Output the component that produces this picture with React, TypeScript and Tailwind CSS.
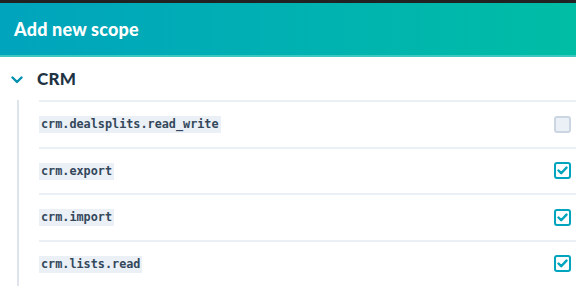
import React from "react";

const rows = [
  { name: "crm.dealsplits.read_write", checked: false },
  { name: "crm.export", checked: true },
  { name: "crm.import", checked: true },
  { name: "crm.lists.read", checked: true },
];

function Check({ checked }: { checked: boolean }) {
  if (!checked) {
    return <div className="w-[17px] h-[17px] rounded-[3px] border-2 border-[#cbd6e2] bg-[#eaf0f6]" />;
  }
  return (
    <div className="w-[17px] h-[17px] rounded-[3px] border-2 border-[#00a4bd] bg-white flex items-center justify-center">
      <svg width="11" height="9" viewBox="0 0 11 9">
        <path d="M1.5 4.5 L4.2 7.2 L9.5 1.6" fill="none" stroke="#00a4bd" strokeWidth="2.4" strokeLinecap="round" strokeLinejoin="round" />
      </svg>
    </div>
  );
}

export default function App() {
  return (
    <div className="w-[576px] h-[289px] overflow-hidden bg-white" style={{ fontFamily: "Lato, 'Open Sans', sans-serif" }}>
      <div className="h-[3px] bg-[#222222]" />
      <div className="h-[54px] bg-gradient-to-r from-[#00a4bd] to-[#00bda5] border-b-2 border-[#3cc7c0] flex items-center pl-[14px]">
        <span className="text-white font-black text-[18px] tracking-[0.2px]">Add new scope</span>
      </div>
      <div className="h-[43px] flex items-center pl-[11px]">
        <svg width="12" height="8" viewBox="0 0 12 8" className="mt-[2px]">
          <path d="M1.5 1.5 L6 6 L10.5 1.5" fill="none" stroke="#0091ae" strokeWidth="2.4" strokeLinecap="round" strokeLinejoin="round" />
        </svg>
        <span className="ml-[14px] font-black text-[17px] text-[#213343] tracking-[0.3px]">CRM</span>
      </div>
      <div className="flex">
        <div className="w-[17px] shrink-0" />
        <div className="w-[2px] shrink-0 bg-[#dfe3eb]" />
        <div className="w-[20px] shrink-0" />
        <div className="flex-1">
          {rows.map((r) => (
            <div key={r.name} className="h-[46.5px] border-t-2 border-[#eaf0f6] flex items-center justify-between pr-[5px]">
              <code
                className="bg-[#eaf0f6] text-[#33475b] text-[11.8px] font-semibold px-[2px] py-[2px] leading-[13px] mt-[1px]"
                style={{ fontFamily: "'DejaVu Sans Mono', 'Liberation Mono', monospace" }}
              >
                {r.name}
              </code>
              <Check checked={r.checked} />
            </div>
          ))}
        </div>
      </div>
    </div>
  );
}
